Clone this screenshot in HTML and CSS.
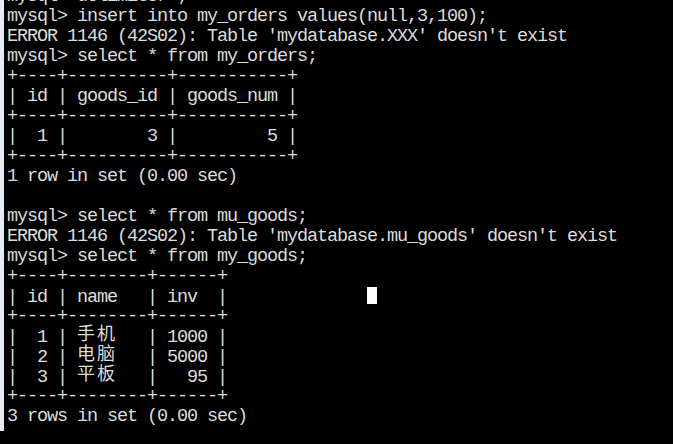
FILE: index.html
```html
<!DOCTYPE html>
<html>
<head>
<meta charset="utf-8">
<link rel="stylesheet" href="styles.css">
</head>
<body>
<div class="console">
<div class="screen">
<div class="ln">mysql&gt; delimiter ;</div>
<div class="ln">mysql&gt; insert into my_orders values(null,3,100);</div>
<div class="ln">ERROR 1146 (42S02): Table 'mydatabase.XXX' doesn't exist</div>
<div class="ln">mysql&gt; select * from my_orders;</div>
<div class="ln">+----+----------+-----------+</div>
<div class="ln">| id | goods_id | goods_num |</div>
<div class="ln">+----+----------+-----------+</div>
<div class="ln">|  1 |        3 |         5 |</div>
<div class="ln">+----+----------+-----------+</div>
<div class="ln">1 row in set (0.00 sec)</div>
<div class="ln"> </div>
<div class="ln">mysql&gt; select * from mu_goods;</div>
<div class="ln">ERROR 1146 (42S02): Table 'mydatabase.mu_goods' doesn't exist</div>
<div class="ln">mysql&gt; select * from my_goods;</div>
<div class="ln">+----+--------+------+</div>
<div class="ln">| id | name   | inv  |              <span class="cursor"></span></div>
<div class="ln">+----+--------+------+</div>
<div class="ln">|  1 | <span class="cjk">手机</span>   | 1000 |</div>
<div class="ln">|  2 | <span class="cjk">电脑</span>   | 5000 |</div>
<div class="ln">|  3 | <span class="cjk">平板</span>   |   95 |</div>
<div class="ln">+----+--------+------+</div>
<div class="ln">3 rows in set (0.00 sec)</div>
<div class="ln"> </div>
</div>
</div>
</body>
</html>
```
FILE: styles.css
```css
html, body {
  margin: 0;
  padding: 0;
  background: #000;
  height: 100%;
  overflow: hidden;
}
.console {
  height: 100%;
  border-left: 4px solid #e4ebf2;
  padding-left: 3px;
  background: #000;
  color: #dcdcdc;
  font-family: "Liberation Mono", monospace;
  font-size: 18.5px;
  letter-spacing: -1.1px;
}
.screen {
  margin-top: -13px;
}
.ln {
  height: 20px;
  line-height: 20px;
  white-space: pre;
}
.cjk {
  font-family: "Noto Sans CJK SC", sans-serif;
  font-size: 18px;
  line-height: 10px;
  letter-spacing: 2px;
  color: #dcdcdc;
  vertical-align: 2px;
}
.cursor {
  display: inline-block;
  width: 10px;
  height: 17px;
  background: #ffffff;
  vertical-align: -2px;
}
```
